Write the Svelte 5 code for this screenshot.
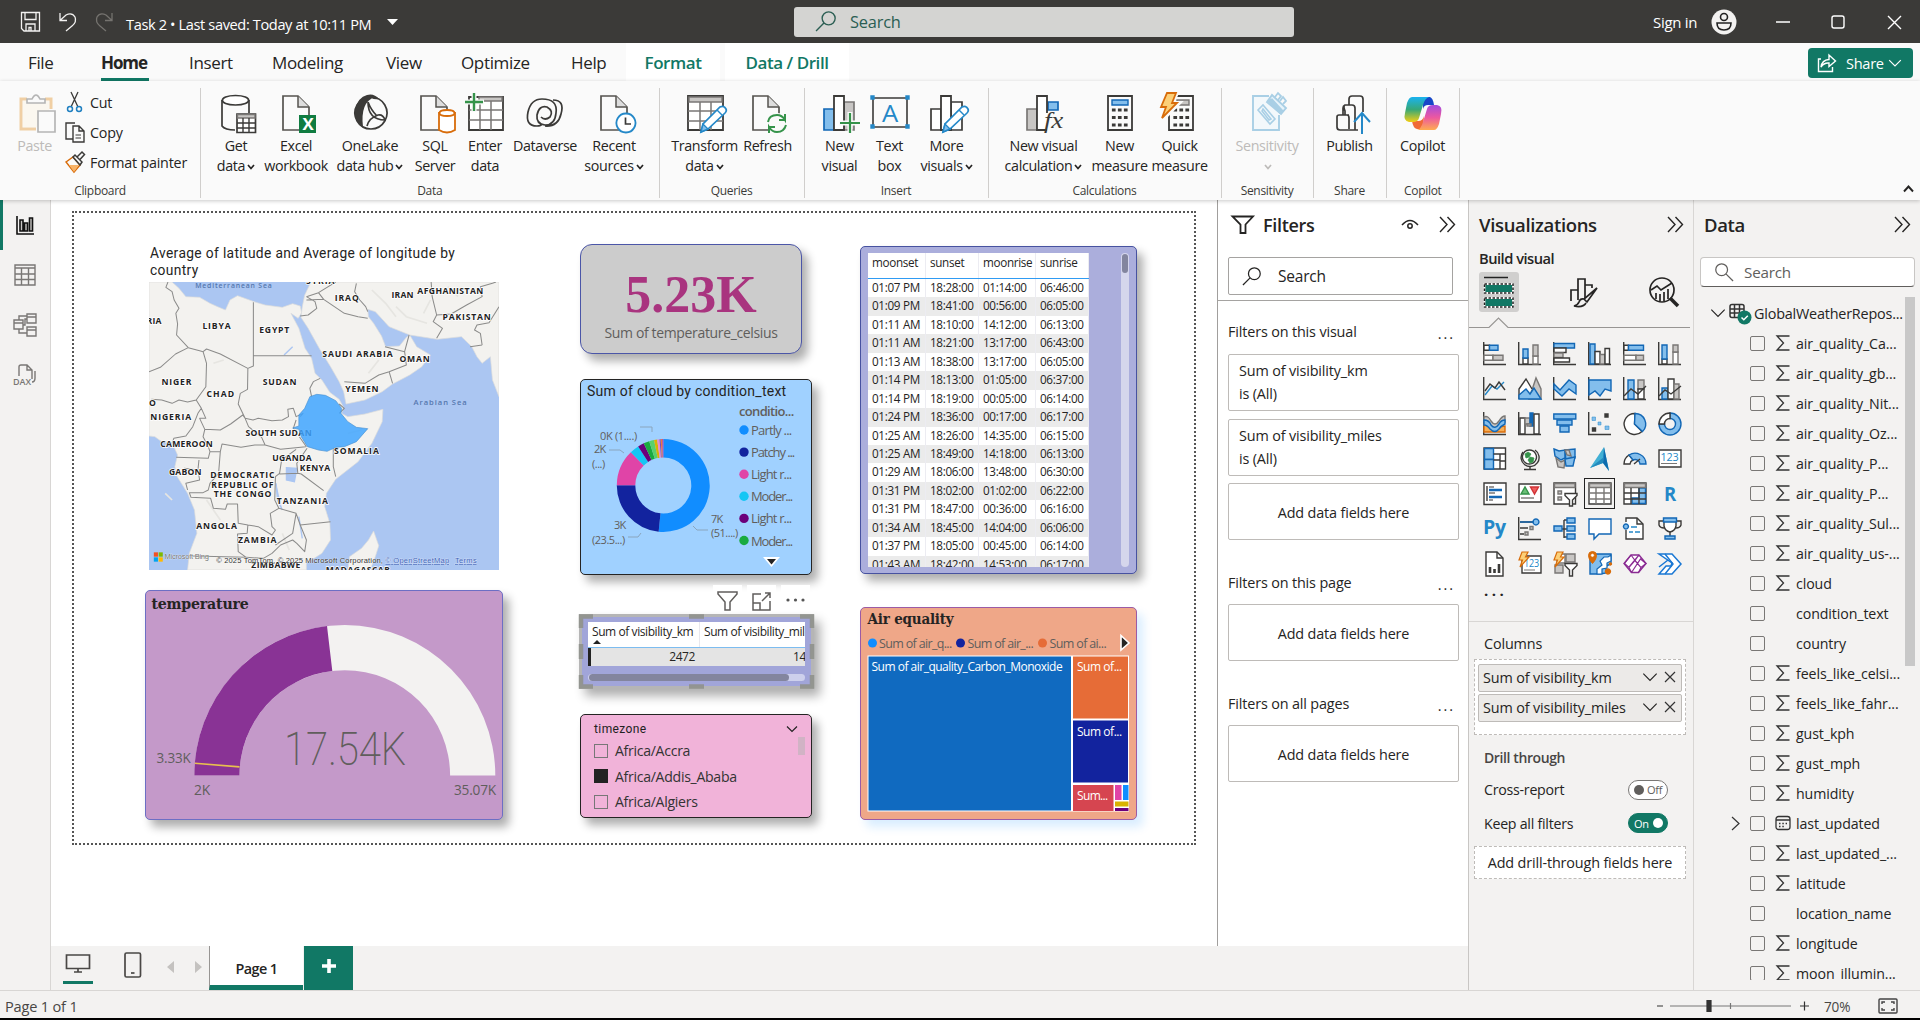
<script>
  const K = '#3b3a38', B = '#1267b5', b = '#83beec', G = '#797775', g = '#c8c6c4', W = '#fff', N = 'none';
  const GR = '#35934a', O = '#d86c0a', PU = '#8b2c93', C = '#2488c8';
  const r = (x, y, w, h) => `M${x} ${y}h${w}v${h}h${-w}z`;
  const p = (d, stroke = K, fill = N, w = 1.4) => ({ d, stroke, fill, w });
  const t = (text, x, y, size, fill, len, extra = {}) => ({ text, x, y, size, fill, len, ...extra });
  const axis = p('M.7 0V22.5H23');
  const bolt = p('M4 0H10L7.500 5H11L2 15L4.500 8H1Z', O, '#fcd078', 1.2);
  const funnel = p('M12 11.500h12v2l-4.500 4.500v6h-3v-6L12 13.500z', K, W);

  const visuals = [
    [axis, p(r(1, 3.3, 5.5, 5), K, W), p(r(6.500, 3.300, 8.500, 5), B, b), p(r(1, 13.300, 9, 5), G, W), p(r(10, 13.300, 10, 5), G, g)],
    [axis, p(r(5, 16, 5, 6), K, W), p(r(5, 7, 5, 9), B, b), p(r(15, 14, 5, 8), G, W), p(r(15, 3, 5, 11), G, g)],
    [axis, p(r(1, 1.5, 20.500, 4.500), B, b), p(r(1, 6, 12, 4.500), K, W), p(r(1, 11, 9, 4.500), G, g), p(r(1, 16, 15.500, 4), K, W)],
    [axis, p(r(2, 2, 5, 20), B, b), p(r(7, 9.500, 5, 12.500), K, W), p(r(12, 12.500, 5, 9.500), G, g), p(r(17, 6.500, 4.500, 15.500), K, W)],
    [axis, p(r(1, 3.3, 4.500, 5), K, W), p(r(5.500, 3.3, 15, 5), B, b), p(r(1, 13.3, 12, 5), G, W), p(r(13, 13.300, 7.500, 5), G, g)],
    [axis, p(r(4, 17, 5, 5), K, W), p(r(4, 3, 5, 14), B, b), p(r(15, 10, 5, 12), G, W), p(r(15, 3, 5, 7), G, g)],
    [axis, p('M2 18L9 9L14 12L21 5', C), p('M2 14L7 7L12 11L16 5L22 13', K)],
    [p('M11 22L18 1L23 12V22Z', G, g), p('M1 22V12L8 2L14 12', K, W), p('M1 22V18L8 12L12 17L16 11L23 22Z', B, b)],
    [axis, p('M1 7L7 13L16 3L23 8V17L16 12L9 19L1 12Z', B, b)],
    [axis, p('M1 3H23V14L17 12L12 19L7 14L1 18Z', B, b)],
    [axis, p(r(5, 3, 6, 19), B, b), p(r(15, 3, 6, 9), G, g), p(r(15, 12, 6, 10), K, W), p('M1 19L8 12L15 17L23 9')],
    [axis, p(r(4, 11, 6, 11), B, b), p(r(10, 2, 6, 20), K, W), p(r(16, 7, 5, 15), G, g), p('M1 19L7 13L13 17L23 9')],
    [axis, p('M1 5Q5 3 8 9Q12 15 16 9Q19 4 22 4V10Q18 12 15 17Q12 19 7 15L1 10Z', G, g), p('M1 12Q5 12 8 16Q12 19 16 15L22 14V20H1Z', O, '#f6ad55'), p('M1 8Q6 8 8 13Q12 18 16 12Q18 8 22 8V12Q18 14 16 17Q12 22 7 17Q4 13 1 13Z', B, b)],
    [axis, p(r(2, 6, 5, 16), K, W), p(r(7, 6, 5, 6), G, g), p(r(12, 1, 3, 13), B, B), p(r(9, 12, 4, 2), G, g), p(r(16, 2, 5, 20), K, W)],
    [p(r(.8, 2, 22, 5), B, b), p(r(4, 8, 15, 5), B, b), p(r(7, 14, 9, 6), B, b)],
    [axis, p(r(4, 5, 3.500, 3.500), C, b, .5), p(r(10, 10, 3, 3), C, b, .5), p(r(17, 14, 4, 3.500), C, b, .5), p(r(17, 2, 3, 3), K, K), p(r(4.500, 16, 3, 3), K, K)],
    [p('M12 1.500a10.500 10.500 0 1 0 7 18L11.500 12z', K, W), p('M12 1.500a10.500 10.500 0 0 1 7.500 18L11.500 12z', B, b)],
    [p('M12 1A11 11 0 1 1 1 12H6.500A5.500 5.500 0 1 0 12 6.500Z', B, b), p('M1 12A11 11 0 0 1 12 1V6.500A5.500 5.500 0 0 0 6.500 12Z', K, W)],
    [p(r(1, 1, 21.500, 21), K, W), p(r(1.500, 1.500, 9, 11), B, b), p(r(1.500, 12.500, 9, 9.500), B, b), p('M10.500 7H22M10.500 13H17V22M17 7V22M17 14H22', K)],
    [p('M5 5a9 9 0 1 0 12-2', K), p('M11.500 3a7 7 0 1 1-.1 0z', K, W), p('M7 7l3-2 3 2-2 3-3 1zM12 10l4 1-1 4-3 1-2-3z', GR, GR, .8), p('M12 19v3M6 22.500h12')],
    [p('M1 2l5 2 6-1V11L8 13L2 9Z', B, b), p('M12 3l10-1V11l-9 3z', B, b), p('M12 3l2 5 4 1-2-6zM3 11l5 4 4-2-1 8-6-1z', G, g), p('M12 12L22 10L20 19L13 19z', B, b)],
    [p('M16 0L2 21L15 16L21 24Z', N, '#41b0d5'), p('M16 0L15 16L21 24Z', N, '#0e6caf'), p('M2 21L15 16L16 10Z', N, '#238abd')],
    [p('M1 17a11 11 0 0 1 5-9l4 5a5 5 0 0 0-3 4z', K, W), p('M6 8a11 11 0 0 1 17 9h-6a5 5 0 0 0-7-4z', B, b), p('M11 17L17 12')],
    [p(r(1, 3, 22, 17), K, W), t('123', 2.500, 14, 11, C, 18), p('M3 16.500h16', G, N, 1)],
    [p(r(1, 1, 22, 21.500), K, W), p('M4 4v15', K), p('M6 8h13M6 15h13', B, N, 2.5), p('M6 5h5M6 11h6M6 18h4', G)],
    [p(r(1, 2, 22, 18), K, W), p('M3 12L7 5L11 12Z', GR, '#6abf76'), p('M12.500 5h8l-4 7z', '#d13438', '#ee5c5c'), p('M3 16h13', G)],
    [p(r(1, 1, 21.500, 21), K, W), p(r(1.500, 1.500, 20.500, 4), G, g), p(r(5, 9, 3.500, 3), G, g), p(r(5, 15, 3.500, 3), G, g), funnel],
    [p(r(1, 1, 22, 21), K, W), p(r(1.500, 1.500, 21, 4), G, g), p('M1 11H23M1 17H23M8 6V22M16 6V22', G)],
    [p(r(1, 1, 22, 21), K, W), p('M16 6h6.500v15.500H9V16h7z', B, b), p(r(1.500, 1.500, 21, 4), G, g), p('M1 11H23M1 17H23M8 6V22M16 6V22', K)],
    [t('R', 6, 19, 19, C, 12, { bold: true })],
    [t('Py', 0, 17, 20, C, 23, { bold: true })],
    [axis, p('M2 5H16M2 11H10M2 17H6', K), p('M18 2a3 3 0 1 1-.1 0z', B, b), p('M12 9.500h3v3h-3zM7 15h3v3H7z', G, g), p('M2 5H16', B)],
    [p('M8 12H14M11 3V21M11 3H15M11 20H15', K), p(r(1, 9, 8, 5), B, b), p(r(14, 1, 8, 5), B, b), p(r(14, 9, 8, 5), B, b), p(r(14, 17, 8, 5), B, b)],
    [p('M1 2H23V17H11L6 22V17H1Z', B, W)],
    [p('M3 5V1H14L20 7V22H3V13', K, W), p('M14 1V7H20', K), p('M3 7a2.500 2.500 0 1 1-.1 0z', B, b), p('M8 10h6M6 15h4M12 15h5', C, N, 1.6)],
    [p('M6 2H18V9Q17 14 12 15Q7 14 6 9Z', K, W), p('M6 4H1V8Q2 11 6 11M18 4H23V8Q22 11 18 11M12 15V19', K), p(r(5.500, 1, 13, 4), B, b), p(r(7, 19, 10, 3), B, b)],
    [p('M3 0H14L20 6V24H3Z', K, W), p('M14 0V6H20', K), p('M7 21v-6M11.500 21v-4M16 21v-9', K, N, 2.6)],
    [p(r(4, 4, 19, 17), K, W), t('123', 6, 15, 10, C, 15), p('M6 18h11', G, N, 1), bolt],
    [p(r(4, 2, 8, 9), G, W), p(r(13, 2, 9, 8), G, g), p(r(2, 13, 8, 8), G, g), funnel, bolt],
    [p('M2 2H23V12L18 14V21L12 22H2Z', B, b), p('M23 3V9L19 11V16L14 17V22H9V17L14 13L12 9L16 5H20Z', B, W, 1.2), p('M4.500-.5a4 4 0 0 1 4 4q0 4-4 8q-4-4-4-8a4 4 0 0 1 4-4z', O, O, 1), p('M4.500 2a1.300 1.300 0 1 1-.1 0z', W, W, .5), p('M20 17a2.500 2.500 0 1 1-.1 0z', O, O), p('M22.500 11a1 1 0 1 1-.1 0z', O, O)],
    [p('M8 3H16L23 11.500L15.500 20.500H8.500L1 11.500Z', PU, W, 1.4), p('M8 3L1.500 11.500L6 15.500L12 8.500L8 3M16 3L6.500 14.500M12 8.500L18 15.500L15.500 20.500M12 8.500L16 3M18 15.500L23 11.500L17.500 7L8.500 20.500M6 15.500L8.500 20.500', PU, N, 1.2)],
    [p('M1 2H14L23 12L14 22H1L8 14H13L14 11L1 2Z', '#1a78d4', W, 1.5), p('M7 2L15 12L7 22M1 15L10 8', '#1a78d4', N, 1.5)]
  ];

  const page = (x) => [p(`M${x} 4H${x + 15}L${x + 26} 15V38H${x}Z`, '#55534f', '#fafafa', 1.7), p(`M${x + 15} 4V15H${x + 26}`, '#55534f', '#ddd', 1.5)];
  const pencil = [p('M16 40L18 32L35 15Q39 13 41 17Q42 19 40 21L23 37Z', '#2488c8', W, 1.7), p('M16 40L18 32L23 37Z', '#2488c8', b), p('M32 18L37 23', '#2488c8')];
  const keys = (x) => p([0, 1, 2].map((j) => [0, 1, 2].map((i) => r(x + i * 6, 17 + j * 7.500, 2.500, 2)).join('')).join(''), K, K, 1.2);

  const icons = {
    paste: [p('M9 7H3V37H18M27 7H33V17', '#f0cfa4', N, 3), p('M5 9H31V35H5Z', N, '#fbf7ef'), p('M9 11V7H14Q18-1 22 7H27V11Z', '#b5b5b5', '#fafafa', 1.6), p(r(20, 19, 17, 21), '#b5b5b5', '#fafafa', 1.7)],
    getdata: [p('M6 8V34Q9 38 19 38M33 8V21', K, N, 1.7), p('M19.500 3.500C37 3.500 37 13 19.500 13S2 3.500 19.500 3.500z', K, W, 1.7), p(r(21, 22, 18.500, 18.500), K, W, 1.7), p(r(21.500, 22.500, 17.500, 3.500), G, g), p('M21 31H39M21 36H39M27 26V40M33 26V40', K)],
    excel: [...page(7), p(r(23, 23, 17, 18), N, '#107c41'), t('X', 26.500, 37.500, 16, W, 11, { bold: true })],
    onelake: [p('M21 5A16 16 0 1 1 20.900 5Z', K, '#fafafa', 1.7), p('M25 5Q10 10 13 35Q3 28 5 18Q8 5 17 3Q24 1 29 7Q25 8 21 6Z', N, K), p('M18 10Q18 28 35 28Q33 22 28 23Q19 26 17 34M18 10Q21 18 27 24', K, N, 1.7)],
    sql: [...page(6), p('M24 21V38Q32 43 40 38V21Z', O, W, 1.8), p('M32 18C42 18 42 24 32 24S22 18 32 18z', O, W, 1.8)],
    enter: [p(r(4, 5, 34, 33), K, W, 1.8), p(r(14, 5, 23, 4), G, g), p('M4 18H38M4 28H38M15 12V38M26 9V38', G, N, 1.5), p('M9 0V20M-1 10H19', '#fafafa', N, 5), p('M9 1V19M0 10H18', GR, N, 2.4)],
    dataverse: [p('M12 34Q0 34 3 20Q6 7 17 7Q33 7 31 21Q30 33 20 33Q11 32 12 23Q14 13 22 15Q29 19 25 25Q20 29 16 25M28 8Q40 8 36 22Q33 35 20 34M12 34Q16 34 17 32', K, N, 1.7)],
    recent: [...page(7), p('M32 21.500a9.500 9.500 0 1 1-.1 0z', '#2488c8', W, 1.8), p('M31.500 25.500V32H37', K, N, 1.7)],
    transform: [p(r(3, 4, 35, 34), K, W, 1.8), p(r(4, 5, 33, 5), G, g), p('M3 19H38M3 29H38M15 10V38M26 10V38', G, N, 1.5), ...pencil],
    refresh: [...page(5), p('M29 21a10.500 10.500 0 1 1-.1 0z', N, '#fafafa'), p('M20 30Q21 23 29 23Q34 23 37 28V22M37 28H31M38 33Q36 40 29 40Q24 40 21 35V41M21 35H27', GR, N, 2)],
    newvisual: [p(r(4, 17, 10, 21), B, b, 1.7), p(r(24, 10, 10, 28), G, g, 1.7), p(r(14, 4, 10, 34), K, W, 1.8), p('M30 20V42M19 31H41', '#fafafa', N, 5), p('M30 21V41M20 31H40', GR, N, 2.2)],
    textbox: [p(r(3, 6, 34, 29), K, '#fafafa', 1.6), p(r(1, 4, 3, 3) + r(36, 4, 3, 3) + r(1, 33, 3, 3) + r(36, 33, 3, 3), C, C), t('A', 12, 30, 24, C, 16)],
    morevisuals: [p(r(4, 17, 10, 21), K, W, 1.7), p(r(24, 10, 11, 28), K, W, 1.7), p(r(14, 4, 10, 34), K, W, 1.8), ...pencil],
    newcalc: [p(r(3, 17, 10, 21), G, g, 1.7), p(r(24, 10, 10, 8), B, b, 1.7), p('M23 38H13V4H23V21', K, W, 1.8), t('fx', 20, 36, 24, K, 19, { serif: true })],
    newmeasure: [p(r(8, 4, 24, 34), K, '#fafafa', 1.8), p(r(12, 8, 16, 5), B, b), keys(12.500)],
    quick: [p(r(9, 4, 24, 34), K, '#fafafa', 1.8), p(r(17, 8, 12, 5), G, g), keys(14), p('M7 1H17L12 11H19L2 28L7 16H0Z', '#fafafa', '#fafafa', 4), p('M7 1H16L12 11H17L2 26L6 15H1Z', O, '#fcd078', 1.8)],
    sensitivity: [p('M22 4H6V38H32V23', '#a9cfe5', '#f3f8fb', 1.9), p('M11 18L16 13L28 27L23 32ZM15 19L16 17L24 27L22 28Z', '#a9cfe5', N, 1.6), p('M20 10L25 3L39 16L34 22Z', '#a9cfe5', '#e7f3fa', 1.9), p('M21 9L25 7L36 19L33 21Z', '#a9cfe5', '#a9cfe5'), p('M28 5L31 1L34 4L31 8M33 9L36 5L39 9L36 12', '#a9cfe5', N, 1.8)],
    publish: [p('M7 25Q7 23 9 23H15V19Q13 14 15 13H19V7Q19 4 22 4H30Q33 4 33 7V20M13 23V16Q13 14 15 13H22Q25 13 25 16V37M19 23H17Q19 23 19 26V37M7 25V35Q7 38 10 38H28M9 23H17M25 20V38', K, N, 1.7), p('M32 42V22M24 30L32 21L40 30', '#2488c8', N, 2)]
  };

  const groups = [
    { name: 'Data', w: 458.500, pad: 5, items: [
      ['getdata', 'Get', 'data', 60, 1], ['excel', 'Excel', 'workbook', 60], ['onelake', 'OneLake', 'data hub', 88, 1], ['sql', 'SQL', 'Server', 42],
      ['enter', 'Enter', 'data', 58], ['dataverse', 'Dataverse', '', 62], ['recent', 'Recent', 'sources', 76, 1]] },
    { name: 'Queries', w: 145, pad: 5, items: [['transform', 'Transform', 'data', 80, 1], ['refresh', 'Refresh', '', 46]] },
    { name: 'Insert', w: 184, pad: 10, items: [['newvisual', 'New', 'visual', 50], ['textbox', 'Text', 'box', 50], ['morevisuals', 'More', 'visuals', 64, 1]] },
    { name: 'Calculations', w: 233, pad: 5, items: [['newcalc', 'New visual', 'calculation', 100, 1], ['newmeasure', 'New', 'measure', 52], ['quick', 'Quick', 'measure', 68]] },
    { name: 'Sensitivity', w: 92, pad: 0, off: true, items: [['sensitivity', 'Sensitivity', '', 91, 1]] },
    { name: 'Share', w: 73, pad: 0, items: [['publish', 'Publish', '', 72]] },
    { name: 'Copilot', w: 73.500, pad: 0, items: [['copilot', 'Copilot', '', 72]] }
  ];

  const rows = [
    ['01:07 PM', '18:28:00', '01:14:00', '06:46:00'], ['01:09 PM', '18:41:00', '00:56:00', '06:05:00'], ['01:11 AM', '18:10:00', '14:12:00', '06:13:00'],
    ['01:11 AM', '18:21:00', '13:17:00', '06:43:00'], ['01:13 AM', '18:38:00', '13:17:00', '06:05:00'], ['01:14 PM', '18:13:00', '01:05:00', '06:37:00'],
    ['01:14 PM', '18:19:00', '00:05:00', '06:14:00'], ['01:24 PM', '18:36:00', '00:17:00', '06:17:00'], ['01:25 AM', '18:26:00', '14:35:00', '06:15:00'],
    ['01:25 AM', '18:49:00', '14:18:00', '06:13:00'], ['01:29 AM', '18:06:00', '13:48:00', '06:30:00'], ['01:31 PM', '18:02:00', '01:02:00', '06:22:00'],
    ['01:31 PM', '18:47:00', '00:36:00', '06:16:00'], ['01:34 AM', '18:45:00', '14:04:00', '06:06:00'], ['01:37 PM', '18:05:00', '00:45:00', '06:14:00'],
    ['01:43 AM', '18:42:00', '14:53:00', '06:17:00']
  ];

  const fields = [
    ['air_quality_Ca...', 1], ['air_quality_gb...', 1], ['air_quality_Nit...', 1], ['air_quality_Oz...', 1], ['air_quality_P...', 1], ['air_quality_P...', 1],
    ['air_quality_Sul...', 1], ['air_quality_us-...', 1], ['cloud', 1], ['condition_text', 0], ['country', 0], ['feels_like_celsi...', 1], ['feels_like_fahr...', 1],
    ['gust_kph', 1], ['gust_mph', 1], ['humidity', 1], ['last_updated', 2], ['last_updated_...', 1], ['latitude', 1], ['location_name', 0], ['longitude', 1], ['moon_illumin...', 1]
  ];

  const slices = [[0, 51.6, '#118dff'], [51.6, 75.1, '#12239e'], [75.1, 87.7, '#e044a7'], [87.7, 90.9, '#15c6f4'], [90.9, 93.1, '#6b007b'], [93.1, 95.1, '#1aab40'],
    [95.1, 96.8, '#5ad06c'], [96.8, 97.9, '#d9b300'], [97.9, 98.7, '#e98bd0'], [98.7, 99.100, '#744ec2'], [99.100, 99.600, '#e8793f'], [99.600, 100, '#c83d95']];
  function arc([a, z]) {
    const pt = (v, rad) => {
      const q = (v / 100) * Math.PI * 2;
      return `${(82.3 + rad * Math.sin(q)).toFixed(2)} ${(105.500 - rad * Math.cos(q)).toFixed(2)}`;
    };
    const big = z - a > 50 ? 1 : 0;
    return `M${pt(a, 46.500)}A46.500 46.500 0 ${big} 1 ${pt(z, 46.500)}L${pt(z, 28)}A28 28 0 ${big} 0 ${pt(a, 28)}Z`;
  }
  const legend = [['Partly ...', '#118dff', 35], ['Patchy ...', '#12239e', 38], ['Light r...', '#e044a7', 35], ['Moder...', '#15c6f4', 36], ['Light r...', '#6b007b', 35], ['Moder...', '#1aab40', 36]];

  const places = [
    ['SYRIA', 889, 252, 82], ['IRAQ', 972, 304, 70], ['IRAN', 1137, 293, 64], ['AFGHANISTAN', 1212, 283, 191], ['PAKISTAN', 1285, 361, 140],
    ['LIBYA', 588, 388, 82], ['EGYPT', 753, 398, 87], ['SAUDI ARABIA', 936, 472, 204], ['OMAN', 1160, 487, 88], ['NIGER', 469, 556, 87], ['SUDAN', 763, 556, 98],
    ['CHAD', 600, 592, 80], ['YEMEN', 1003, 577, 96], ['NIGERIA', 437, 661, 118], ['SOUTH SUDAN', 713, 709, 192], ['CAMEROON', 466, 741, 152],
    ['SOMALIA', 970, 761, 130], ['UGANDA', 791, 782, 114], ['KENYA', 871, 814, 88], ['GABON', 491, 825, 94], ['DEMOCRATIC', 611, 834, 186],
    ['REPUBLIC OF', 614, 863, 180], ['THE CONGO', 621, 890, 167], ['TANZANIA', 804, 913, 148], ['ANGOLA', 570, 987, 118], ['ZAMBIA', 691, 1029, 112],
    ['ZIMBABWE', 730, 1105, 142], ['MADAGASCAR', 946, 1118, 186], ['RIA', 426, 372, 43], ['O', 433, 619, 16]
  ];
  const borders = 'M488 246L482 262L500 275L506 300L520 325L511 340L516 372L513 405L547 443L580 452L590 455L600 447L640 462L720 505L736 498V307M736 467H905M547 443L510 462L466 502L433 515M590 455L600 490L598 560L570 600L545 606L520 600L500 610L470 600L440 598M570 600L585 625L575 640L560 680L540 708L505 715L500 730M720 505L719 568L698 580L692 612L712 655L705 645L670 672L640 690L595 688L580 655L598 655L585 625M712 655L735 660L750 655L790 662L820 660L838 650L836 628L852 625L860 650L880 640L872 650M712 655L722 680L760 712L770 735L740 735L700 742L645 732L640 755L610 755L605 775L512 772M595 688L590 710L605 740L610 755M640 755L635 820L610 850L605 870L590 878H550L555 892L612 895L620 925L655 928L660 912H690L692 970L720 975L718 1000L690 1002L692 1055L715 1072L560 1068M770 735L815 748L888 740M860 748L818 780L812 820L800 830L798 900L810 925L785 940L790 980L800 990L790 1005L750 980L720 975M812 822L865 820L875 822L940 872M865 820L862 790L892 745M968 745V800L975 830M905 590L900 565L910 545L930 535M860 660L852 685L890 740M985 612L1000 625L985 640M810 925L860 940L872 975L960 965M872 975L890 1020L885 1055L862 1030L850 1020L815 1035L790 1060L765 1075L715 1072M860 940L850 1000L800 1035M578 780L575 810L535 805M575 810L580 840L540 850L545 870M890 290L915 305L920 325L895 345L872 348M890 300L940 298L1000 340L1040 350L1068 355M940 298L925 278L890 290M925 278L975 246M1035 250L1030 275L1045 300L1062 320L1068 335M1000 545L1060 550L1100 525L1130 515L1180 495L1175 455L1118 440M1130 515L1140 550M1175 455L1188 405M1252 246L1255 290L1268 345L1258 365L1285 385L1268 415M1268 345L1310 342L1355 315L1400 290L1395 260L1430 250M1400 435L1365 440M1400 435L1395 400L1378 390L1385 375L1420 368L1449 320M1430 250L1440 246';
</script>

{#snippet shapes(list)}
  {#each list as s}
    {#if s.text}
      <text x={s.x} y={s.y} font-size={s.size} fill={s.fill} textLength={s.len} lengthAdjust="spacingAndGlyphs" font-weight={s.bold ? 700 : 400}
        font-family={s.serif ? 'Liberation Serif' : 'Open Sans'} font-style={s.serif ? 'italic' : 'normal'}>{s.text}</text>
    {:else}
      <path d={s.d} stroke={s.stroke} fill={s.fill} stroke-width={s.w} />
    {/if}
  {/each}
{/snippet}
{#snippet chev(size)}
  <svg class="chev" width={size} height={size} viewBox="0 0 12 12"><path d="M1 3.500L6 8.500L11 3.500" fill="none" stroke="currentColor" stroke-width={14 / size} /></svg>
{/snippet}
{#snippet collapse()}
  <svg width="17" height="17" viewBox="0 0 17 17" fill="none" stroke="#252423" stroke-width="1.400"><path d="M1 1L8 8.500L1 16M8.500 1L15.500 8.500L8.500 16" /></svg>
{/snippet}
{#snippet lens(size, flip)}
  <svg class:flip width={size} height={size} viewBox="0 0 20 20" fill="none" stroke="currentColor" stroke-width="1.300"><circle cx="13" cy="7" r="6.200" /><path d="M8.500 11.500L1 19" /></svg>
{/snippet}

<div class="app">
  <header class="titlebar">
    <svg class="qa" width="104" height="26" viewBox="0 0 104 26" fill="none" stroke="#f3f2f1" stroke-width="1.300">
      <path d="M1.500 3.500H19.500V22H4L1.500 19.500ZM5 4V10.500H16V4M6 22V15H15V22M9 22V18.500H11V22" />
      <path d="M40 4V11.500H47M40 11.500L46 6Q52 3 55 8Q57 13 52 17L46 22" />
      <path stroke="#75736f" d="M92 4V11.500H85M92 11.500L86 6Q80 3 77 8Q75 13 80 17L86 22" />
    </svg>
    <span class="doc">Task 2 • Last saved: Today at 10:11 PM</span>
    <svg width="11" height="6" viewBox="0 0 11 6"><path d="M0 0H11L5.500 6Z" fill="#fff" /></svg>
    <div class="topsearch">{@render lens(21)}<span>Search</span></div>
    <span class="signin">Sign in</span>
    <svg class="avatar" width="26" height="26" viewBox="0 0 26 26"><circle cx="13" cy="13" r="12.500" fill="#f3f2f1" /><circle cx="13" cy="8" r="3.500" fill="none" stroke="#222" stroke-width="1.600" /><path d="M6 14H20Q20 21 13 21Q6 21 6 14Z" fill="none" stroke="#222" stroke-width="1.600" /></svg>
    <svg class="win" width="126" height="16" viewBox="0 0 126 16" fill="none" stroke="#fff" stroke-width="1.400"><path d="M0 8H14M112 2L125 15M125 2L112 15" /><rect x="56" y="2" width="12" height="12" rx="2" /></svg>
  </header>

  <nav class="tabs">
    <span class="t file">File</span><span class="t home">Home</span><span class="t insert">Insert</span><span class="t modeling">Modeling</span><span class="t view">View</span>
    <span class="t optimize">Optimize</span><span class="t help">Help</span><span class="t ctx format">Format</span><span class="t ctx drill">Data / Drill</span>
    <button class="share">
      <svg width="20" height="20" viewBox="0 0 20 20" fill="none" stroke="#fff" stroke-width="1.400"><path d="M4 6H1.500V18.500H15.500V14M4 14Q5 7 12 6.500V2L18.500 8L12 13.500V10Q7 9.500 4 14Z" /></svg>
      <span>Share</span>{@render chev(14)}
    </button>
  </nav>

  <section class="ribbon">
    <div class="group clip">
      <div class="gbody">
        <div class="paste"><svg width="40" height="42" viewBox="-3 0 40 42">{@render shapes(icons.paste)}</svg><span>Paste</span></div>
        <div class="cliplist">
          <div><svg width="20" height="22" viewBox="0 0 20 22" fill="none" stroke="#3b3a38" stroke-width="1.300"><path d="M6 1L13 16M13 1L6 16" /><g stroke="#1f7fc0" stroke-width="1.500"><circle cx="5" cy="18" r="2.500" /><circle cx="14" cy="18" r="2.500" /></g></svg>Cut</div>
          <div><svg width="20" height="22" viewBox="0 0 20 22" fill="#fafafa" stroke="#3b3a38" stroke-width="1.400"><path d="M8 18H1V2H10M8 5H14L19 10V21H8ZM14 5V10H19" /><path d="M10.500 14H16M10.500 17H16" stroke-width="1" /></svg>Copy</div>
          <div><svg width="20" height="22" viewBox="0 0 20 22" fill="#fafafa" stroke-width="1.500"><path d="M1 11L8 6L15 14L9 21Z" stroke="#d86c0a" /><path d="M4 14L14 14L9 21Z" fill="#f8b368" /><path d="M8 6L10 4L17 11L15 14ZM12 6L17 1L19.500 3.500L14.500 9" stroke="#3b3a38" /></svg>Format painter</div>
        </div>
      </div>
      <span class="gname">Clipboard</span>
    </div>
    {#each groups as grp}
      <div class="group" class:off={grp.off} style:width="{grp.w}px">
        <div class="gbody" style:padding-left="{grp.pad}px">
          {#each grp.items as [icon, a, z, w, menu]}
            <div class="btn" style:width="{w}px">
              {#if icon === 'copilot'}
                <svg width="40" height="42" viewBox="0 0 40 42">
                  <defs>
                    <linearGradient id="cp1" x1="0" y1="0" x2="0" y2="1"><stop offset="0" stop-color="#1ab2f0" /><stop offset=".5" stop-color="#36a878" /><stop offset="1" stop-color="#f3ce14" /></linearGradient>
                    <linearGradient id="cp2" x1="0" y1="0" x2="0" y2="1"><stop offset="0" stop-color="#a34cdf" /><stop offset=".5" stop-color="#ec58a0" /><stop offset="1" stop-color="#ffac50" /></linearGradient>
                  </defs>
                  <path d="M20 5H27Q30 6 31 13H25Q21 13 20 17Z" fill="#1747c8" /><path d="M20 37H14Q10 36 9 29H15Q20 29 21 24Z" fill="#f06a36" />
                  <path d="M9 5H26Q22 6 20 13L16 26Q15 30 10 30H6Q0 29 2 21L4 11Q6 5 9 5Z" fill="url(#cp1)" />
                  <path d="M31 38H14Q18 37 20 30L24 17Q25 13 30 13H34Q40 14 38 22L36 32Q34 38 31 38Z" fill="url(#cp2)" />
                </svg>
              {:else}
                <svg width="40" height="42" viewBox="0 0 40 42">{@render shapes(icons[icon])}</svg>
              {/if}
              <span>{a}</span><span>{z}{#if menu}<svg class="mini" width="8" height="6" viewBox="0 0 8 6"><path d="M1 1L4 4.500L7 1" fill="none" stroke="currentColor" stroke-width="1.700" /></svg>{/if}</span>
            </div>
          {/each}
        </div>
        <span class="gname">{grp.name}</span>
      </div>
    {/each}
    <svg class="up" width="11" height="8" viewBox="0 0 11 8"><path d="M1 6.500L5.500 1.500L10 6.500" fill="none" stroke="#252423" stroke-width="1.900" /></svg>
  </section>

  <main>
    <aside class="rail">
      <div class="sel"><svg width="24" height="24" viewBox="0 0 24 24" fill="#c8c6c4" stroke="#111" stroke-width="1.600"><path d="M4 3V21H21" fill="none" /><path d="M7 7h3v11H7zM11.500 10h3v8h-3zM16.500 5h3v13h-3z" /></svg></div>
      <div><svg width="24" height="24" viewBox="0 0 24 24" fill="none" stroke="#797775" stroke-width="1.400"><path d="M2 2H22V22H2ZM2 5H22M2 11H22M2 16.500H22M8.500 5V22M15.500 5V22" /></svg></div>
      <div><svg width="24" height="24" viewBox="0 0 24 24" fill="none" stroke="#797775" stroke-width="1.400"><path d="M1 7H10V16H1ZM1 10H10M14 1H23V10H14ZM14 4H23M14 14H23V23H14ZM14 17H23M6 7V3H14M10 12H12V6H14M6 16V20H14" /></svg></div>
      <div><svg width="26" height="26" viewBox="0 0 26 26" fill="none" stroke="#797775" stroke-width="1.400"><path d="M7 14V5Q7 3 9 3H15L20 8V17M15 3V8H20M20 20Q23 20 23 16V9" /><text x="1" y="23" font-size="9" fill="#797775" stroke="none" font-weight="600" textLength="18" font-family="Open Sans">DAX</text></svg></div>
    </aside>

    <div class="stage">
      <div class="canvas">
        <div class="pagearea"></div>

        <div class="visual maptitle">Average of latitude and Average of longitude by country</div>
        <svg class="visual map" viewBox="433 246 1016 864" preserveAspectRatio="none">
          <rect x="433" y="246" width="1016" height="864" fill="#abc6f2" />
          <g fill="#f3f2ef" stroke="#dcdcda" stroke-width="2">
            <path d="M433 246H500L520 265L540 290L580 292L610 310L632 320L655 330L668 300L690 287L735 304L770 315L820 322L850 311L872 318L876 338L866 355L845 340L868 385L886 445L905 475L915 520L935 540L958 577L985 598L998 622L992 640L1010 650L1060 642L1112 628L1110 665L1080 730L1040 785L975 838L948 880L943 920L958 970L960 1020L935 1060L890 1090V1110H545L550 1060L572 1000L565 930L545 880L515 830L508 800L516 765L500 728L470 725L450 710L433 708Z" />
            <path d="M903 246L885 285L878 320L874 352L895 385L930 450L960 500L985 545L998 575L1005 612L1060 600L1110 575L1140 552L1190 525L1225 500L1250 465L1210 440L1190 405L1180 412L1160 438L1120 440L1108 408L1085 370L1070 350L1068 328L1090 335L1130 380L1190 405L1270 418L1340 410L1370 440L1385 470L1400 490L1424 470L1430 540L1449 590V246Z" />
            <path d="M1085 993L1100 1037L1090 1070L1075 1110H1010L1015 1070L1050 1045L1070 1020Z" />
          </g>
          <path d="M1250 300L1230 340M1150 320L1180 350L1240 370M1080 270L1120 310L1150 350M1300 260L1330 290M600 900L640 960M820 1000L840 1050M480 880L500 900M1010 700L1050 690M1100 480L1070 520M650 480L620 490" fill="none" stroke="#e6e5e1" stroke-width="5" />
          <path d="M832 803L862 805L855 845L832 840ZM802 850L806 900L820 930M868 950L878 1015M825 465L850 440" fill="#abc6f2" stroke="#abc6f2" stroke-width="4" />
          <path d={borders} fill="none" stroke="#8b8b8a" stroke-width="3" stroke-linejoin="round" />
          <g class="labels">
            {#each places as [name, x, y, len]}<text {x} {y} textLength={len}>{name}</text>{/each}
          </g>
          <path d="M900 590L920 583L945 586L975 602L992 625L990 640L1010 665L1035 682L1068 686L1035 725L1000 740L975 742L950 754L925 750L893 740L875 710L868 688L850 684L868 678V645L885 625Z" fill="#3ea4ff" fill-opacity=".84" stroke="#4b93d2" stroke-width="2" />
          <g class="sea"><text x="567" y="263" textLength="222" font-size="20">Mediterranean Sea</text><text x="1201" y="616" textLength="154">Arabian Sea</text></g>
          <path d="M447 1057h12v13h-12z" fill="#f25022" /><path d="M461 1057h12v13h-12z" fill="#7fba00" /><path d="M447 1072h12v13h-12z" fill="#00a4ef" /><path d="M461 1072h12v13h-12z" fill="#ffb900" />
          <g class="credit"><text x="478" y="1078" textLength="129" fill="#777">Microsoft Bing</text><text x="628" y="1089" textLength="484">© 2025 TomTom, © 2025 Microsoft Corporation,</text>
            <text x="1119" y="1089" textLength="185" fill="#3d62b8" text-decoration="underline">© OpenStreetMap</text><text x="1321" y="1089" textLength="63" fill="#3d62b8" text-decoration="underline">Terms</text></g>
        </svg>

        <div class="visual card kpi"><b>5.23K</b><span>Sum of temperature_celsius</span></div>

        <div class="visual card donut">
          <svg width="230" height="194" viewBox="0 0 230 194">
            <text x="6" y="16" font-size="14" fill="#252423" textLength="199" font-family="Roboto">Sum of cloud by condition_text</text>
            {#each slices as s}<path d={arc(s)} fill={s[2]} />{/each}
            <path d="M59 47H71V52M28 70H39L43 73M47 157H57L60 153M127 150H116L112 146" fill="none" stroke="#8aa5bd" />
            <g fill="#605e5c" font-size="11">
              <text x="19" y="59.500" textLength="37">0K (1....)</text><text x="13" y="73" textLength="12">2K</text><text x="11" y="87.500" textLength="13">(...)</text>
              <text x="33" y="149" textLength="12">3K</text><text x="11" y="163.500" textLength="33">(23.5...)</text><text x="130" y="143" textLength="12">7K</text><text x="130" y="157" textLength="27">(51....)</text>
              <text x="158" y="36" font-size="13" font-weight="600" textLength="55">conditio...</text>
              {#each legend as [name, color, len], i}
                <circle cx="163" cy={50 + i * 22.100} r="4.700" fill={color} /><text x="170" y={55 + i * 22.100} font-size="13" textLength={len + 6}>{name}</text>
              {/each}
            </g>
            <path d="M182 177H199L190.500 187Z" fill="#fff" /><path d="M186 179H195L190.500 184.500Z" fill="#252423" />
          </svg>
        </div>

        <div class="visual card tablecard">
          <div class="grid">
            <div class="thead"><span>moonset</span><span>sunset</span><span>moonrise</span><span>sunrise</span></div>
            {#each rows as row}<div class="trow">{#each row as c}<span>{c}</span>{/each}</div>{/each}
          </div>
          <div class="track"><i></i></div>
        </div>

        <div class="visual card gauge">
          <svg width="356" height="229" viewBox="146 591.500 356 229">
            <text x="151.500" y="609" font-size="14.500" font-weight="700" fill="#252423" textLength="97" lengthAdjust="spacingAndGlyphs" font-family="DejaVu Serif">temperature</text>
            <path d="M194.300 776A150.500 150.500 0 0 1 495.300 776H450.100A105.300 105.300 0 0 0 239.500 776Z" fill="#f3f2f1" />
            <path d="M194.300 776A150.500 150.500 0 0 1 327 626.600L332.300 671.400A105.300 105.300 0 0 0 239.500 776Z" fill="#893395" />
            <path d="M194.800 763.700L239.500 767.400" stroke="#e8c04e" stroke-width="1.600" />
            <g fill="#605e5c" font-size="14">
              <text x="156.500" y="763" textLength="34" lengthAdjust="spacingAndGlyphs">3.33K</text><text x="194" y="795" textLength="16" lengthAdjust="spacingAndGlyphs">2K</text>
              <text x="454" y="795" textLength="42" lengthAdjust="spacingAndGlyphs">35.07K</text>
              <text x="284" y="765" font-size="46" font-weight="200" textLength="122" lengthAdjust="spacingAndGlyphs" font-family="Roboto">17.54K</text>
            </g>
          </svg>
        </div>

        <div class="visual tools">
          <svg width="29" height="29" viewBox="0 0 29 29"><path d="M5 7H24V9L17 17V25H12V17L5 9Z" /></svg>
          <svg width="29" height="29" viewBox="0 0 29 29"><path d="M14 9H6V25H23V16M6 18H13V25M15 16L23 8M18 8H23V13" /></svg>
          <svg width="29" height="29" viewBox="0 0 29 29"><g fill="#555" stroke="none"><circle cx="7" cy="15" r="1.600" /><circle cx="14.500" cy="15" r="1.600" /><circle cx="22" cy="15" r="1.600" /></g></svg>
        </div>
        <div class="visual seltable">
          <div class="st">
            <div class="sth"><span>Sum of visibility_km<i></i></span><span>Sum of visibility_miles</span></div>
            <div class="str"><span>2472</span><span>1464</span></div>
          </div>
          <div class="htrack"><i></i></div>
          <svg width="235" height="75" viewBox="0 0 235 75" fill="none" stroke="#8f918c" stroke-width="4.500" stroke-opacity=".9"><path d="M2 14V2.500H14M221 2.500H233V14M233 61V72.500H221M14 72.500H2V61M110 2.500H125M110 72.500H125M2 30V45M233 30V45" /></svg>
        </div>

        <div class="visual card slicer">
          <div class="sh"><span>timezone</span>{@render chev(12)}</div>
          <div class="so"><i></i>Africa/Accra</div>
          <div class="so"><i class="on"></i>Africa/Addis_Ababa</div>
          <div class="so"><i></i>Africa/Algiers</div>
          <div class="thumb"></div>
        </div>

        <div class="visual card tree">
          <svg width="275" height="211" viewBox="861 608 275 211">
            <text x="867.500" y="624" font-size="14.500" font-weight="700" fill="#252423" textLength="86" lengthAdjust="spacingAndGlyphs" font-family="DejaVu Serif">Air equality</text>
            <circle cx="872.500" cy="643" r="4.500" fill="#118dff" /><circle cx="960.500" cy="643" r="4.500" fill="#12239e" /><circle cx="1042.500" cy="643" r="4.500" fill="#e66c37" />
            <g fill="#605e5c" font-size="12.500"><text x="879" y="647.500" textLength="73">Sum of air_q...</text><text x="967.500" y="647.500" textLength="66">Sum of air_...</text><text x="1049.500" y="647.500" textLength="57">Sum of ai...</text></g>
            <path d="M1121 635.500L1129 643L1121 650Z" fill="#252423" stroke="#fff" stroke-width="1.600" />
            <rect x="867.500" y="655.500" width="261.500" height="156" fill="#fff" />
            <rect x="868.500" y="656.500" width="202.500" height="154" fill="#106ac0" /><rect x="1073" y="656.500" width="55" height="62" fill="#e66c37" /><rect x="1073" y="720.500" width="55" height="62" fill="#12239e" />
            <rect x="1073" y="785" width="40.500" height="26" fill="#d64550" /><rect x="1115" y="785" width="6.500" height="15" fill="#e044a7" /><rect x="1123" y="785" width="5.500" height="15" fill="#118dff" />
            <rect x="1115" y="801.500" width="13.500" height="5" fill="#d9b300" /><rect x="1115" y="808" width="13.500" height="3" fill="#6b007b" />
            <g fill="#fff" font-size="12"><text x="871.500" y="671" textLength="191">Sum of air_quality_Carbon_Monoxide</text><text x="1077" y="671" textLength="45">Sum of...</text><text x="1077" y="736" textLength="45">Sum of...</text><text x="1077" y="800" textLength="31">Sum...</text></g>
          </svg>
        </div>
      </div>

      <aside class="filters">
        <div class="fhead">
          <svg width="24" height="20" viewBox="0 0 24 20"><path d="M1.500 1.500H22L14.500 9.500V18H9.500V9.500Z" fill="none" stroke="#252423" stroke-width="1.800" /></svg>
          <b>Filters</b>
          <svg class="eye" width="18" height="14" viewBox="0 0 18 14" fill="none" stroke="#252423" stroke-width="1.500"><path d="M1 7Q9-2 17 7" /><circle cx="9" cy="8" r="2.200" /></svg>
          {@render collapse()}
        </div>
        <div class="fsearch">{@render lens(19)}<span>Search</span></div>
        <div class="fbody">
          <div class="flabel">Filters on this visual<i>...</i></div>
          <div class="fcard two">Sum of visibility_km<br />is (All)</div>
          <div class="fcard two">Sum of visibility_miles<br />is (All)</div>
          <div class="fcard">Add data fields here</div>
          <div class="flabel next">Filters on this page<i>...</i></div>
          <div class="fcard">Add data fields here</div>
          <div class="flabel next">Filters on all pages<i>...</i></div>
          <div class="fcard">Add data fields here</div>
        </div>
      </aside>

      <footer class="pages">
        <div class="mode on"><svg width="26" height="22" viewBox="0 0 26 22" fill="none" stroke="#4a4846" stroke-width="1.700"><path d="M1.500 2H24.500V15.500H1.500ZM13 15.500V19M9 19H17" /></svg></div>
        <svg class="phone" width="18" height="27" viewBox="0 0 18 27" fill="none" stroke="#4a4846" stroke-width="1.700"><rect x="1" y="1" width="15.500" height="24" rx="1.500" /><path d="M7 21H10.500" /></svg>
        <svg class="arrows" width="36" height="12" viewBox="0 0 36 12" fill="#c4c2c0"><path d="M7 0V12L0 6ZM28 0V12L35 6Z" /></svg>
        <div class="ptab">Page 1</div>
        <div class="padd"><svg width="14" height="14" viewBox="0 0 14 14"><path d="M7 0V14M0 7H14" stroke="#fff" stroke-width="3.600" /></svg></div>
      </footer>
    </div>

    <aside class="viz">
      <div class="phead"><b>Visualizations</b>{@render collapse()}</div>
      <div class="build">Build visual</div>
      <div class="modes">
        <div class="msel"><svg width="32" height="32" viewBox="0 0 32 32"><path d="M1 1.500H25" stroke="#222" stroke-width="1.500" /><path d="M1.500 8H30V17H1.500ZM1.500 22H30V31H1.500Z" fill="#117865" stroke="#fff" stroke-width="1.800" /><path d="M1.500 8H30V17H1.500ZM1.500 22H30V31H1.500Z" fill="none" stroke="#222" stroke-width="1.500" stroke-dasharray="2.500 1.500" /></svg></div>
        <svg width="30" height="32" viewBox="0 0 30 32" fill="none" stroke="#252423" stroke-width="1.700"><path d="M2 25V14H9V3H16V22M16 9H23V12M9 14V24" /><path d="M28 12L15 23L18 26ZM15 23Q11 22 10 26Q9 29 5 30Q14 32 17 27" fill="#f3f2f1" /></svg>
        <svg width="32" height="32" viewBox="0 0 32 32" fill="none" stroke="#252423" stroke-width="1.700"><circle cx="14" cy="14" r="12" /><path d="M3 14L9 10L13 14L24 7M8 23V17M12 25V18M16 25V16M20 23V13" /><path d="M22 22L30 30" stroke-width="3.500" /></svg>
      </div>
      <svg class="notch" width="221" height="12" viewBox="0 0 221 12"><path d="M0 10.500H20L29.500 1L39 10.500H221" fill="none" stroke="#979593" stroke-width="1.200" /></svg>
      <div class="vgrid">
        {#each visuals as v, i}<div class="vi" class:picked={i === 27}><svg width="24" height="24" viewBox="0 0 24 24">{@render shapes(v)}</svg></div>{/each}
      </div>
      <div class="vmore">. . .</div>
      <div class="wells">
        <div class="wl">Columns</div>
        <div class="dash">
          {#each ['Sum of visibility_km', 'Sum of visibility_miles'] as f}
            <div class="pill"><span>{f}</span>{@render chev(16)}<svg width="12" height="12" viewBox="0 0 12 12"><path d="M1 1L11 11M11 1L1 11" stroke="#333" stroke-width="1.200" /></svg></div>
          {/each}
        </div>
        <div class="wl drill2">Drill through</div>
        <div class="opt">Cross-report<span class="toggle"><i></i>Off</span></div>
        <div class="opt">Keep all filters<span class="toggle on">On<i></i></span></div>
        <div class="dash add">Add drill-through fields here</div>
      </div>
    </aside>

    <aside class="data">
      <div class="phead"><b>Data</b>{@render collapse()}</div>
      <div class="dsearch">{@render lens(19, true)}<span>Search</span></div>
      <div class="list">
        <div class="root">
          {@render chev(16)}
          <svg width="24" height="24" viewBox="0 0 24 24" fill="none" stroke="#333" stroke-width="1.500"><rect x="2" y="3.500" width="14" height="13" rx="2" /><path d="M2 8H16M2 12H16M6.500 4V16M11.500 4V16" /><circle cx="16.500" cy="16.500" r="7" fill="#117865" stroke="none" /><path d="M13.500 16.500L15.800 18.800L19.800 14.800" stroke="#fff" /></svg>
          <span>GlobalWeatherRepos...</span>
        </div>
        {#each fields as [name, kind]}
          <div class="field">
            <em>{#if kind === 2}<svg width="9" height="15" viewBox="0 0 9 15"><path d="M1 1L8 7.500L1 14" fill="none" stroke="#333" stroke-width="1.200" /></svg>{/if}</em>
            <i></i>
            <svg width="16" height="16" viewBox="0 0 16 16" fill="none" stroke="#333" stroke-width="1.300">
              {#if kind === 1}<path d="M14.500 1H2L8.500 8L2 15H14.500" />{:else if kind === 2}<rect x="1" y="1.500" width="14" height="13" rx="2.500" /><path d="M1 5H15M4 8.500H5.500M7.300 8.500H8.800M10.600 8.500H12M4 11.500H5.500M7.300 11.500H8.800" />{/if}
            </svg>
            <span>{name}</span>
          </div>
        {/each}
        <div class="dscroll"></div>
      </div>
    </aside>
  </main>

  <footer class="status">
    <span>Page 1 of 1</span>
    <div class="zoom">
      <svg width="152" height="16" viewBox="0 0 152 16" stroke="#333" fill="none" stroke-width="1.200"><path d="M0 8H6M143 8H152M147.500 3.500V12.500" /><path d="M13 8H134" stroke="#777" stroke-width="1" /><path d="M73.500 5V11" stroke="#777" /><path d="M50 2.500h4v11h-4z" fill="#333" /></svg>
      <span>70%</span>
      <svg width="20" height="16" viewBox="0 0 20 16" fill="none" stroke="#444" stroke-width="1.400"><rect x="1" y="1" width="18" height="14" rx="1" /><path d="M4 6V4H7M13 4H16V6M16 10V12H13M7 12H4V10" /></svg>
    </div>
  </footer>
</div>

<style>
  :global(body) { margin: 0; background: #f3f2f1; }
  .app { width: 1920px; height: 1020px; display: flex; flex-direction: column; overflow: hidden; font-family: 'Open Sans', 'Noto Sans', sans-serif; font-size: 14.4px; color: #252423; box-sizing: border-box; border-bottom: 2px solid #000; letter-spacing: -0.2px; }
  .app :global(*) { box-sizing: border-box; }
  svg { overflow: visible; flex: none; display: block; }
  span { white-space: nowrap; }

  .titlebar { height: 43px; flex: none; background: #3b3a38; color: #fff; display: flex; align-items: center; }
  .qa { margin-left: 20px; }
  .doc { margin-left: 2px; width: 261px; padding-top: 5px; font-size: 14.6px; letter-spacing: -0.38px; }
  .topsearch { margin-left: 396px; width: 500px; height: 30px; background: #d4d4d2; border-radius: 3px; display: flex; align-items: center; padding-left: 21px; gap: 14px; color: #2b5e53; font-size: 16.4px; }
  .signin { margin-left: 359px; width: 58px; font-size: 15px; letter-spacing: -0.3px; }
  .win { margin-left: 39px; }

  .tabs { height: 38px; flex: none; background: #fafafa; display: flex; position: relative; font-size: 17px; letter-spacing: -0.35px; }
  .t { height: 38px; line-height: 39px; margin-right: 40px; }
  .file { margin-left: 28px; width: 33px; }
  .home { width: 48px; font-weight: 700; border-bottom: 3px solid #117865; letter-spacing: -1.1px; }
  .insert { width: 43px; } .modeling { width: 74px; } .view { width: 35px; } .optimize { width: 70px; } .help { width: 36px; margin-right: 19px; }
  .ctx { background: #fff; color: #117865; font-weight: 600; text-align: center; letter-spacing: -0.45px; }
  .format { width: 94px; margin-right: 5px; } .drill { width: 124px; }
  .share { margin: 5px 7px 0 auto; width: 105px; height: 30px; border: 0; border-radius: 4px; background: #117865; color: #fff; display: flex; align-items: center; gap: 4px; padding: 0 0 0 9px; font: 14.6px 'Open Sans', sans-serif; letter-spacing: -0.3px; }
  .share span { margin-left: 5px; }

  .ribbon { height: 119px; flex: none; background: #fafafa; display: flex; position: relative; z-index: 2; box-shadow: 0 1px 4px rgba(0, 0, 0, 0.22); padding-top: 7px; }
  .group { height: 110px; border-right: 1px solid #d0cecc; display: flex; flex-direction: column; align-items: center; flex: none; }
  .clip { width: 201px; }
  .gbody { height: 95px; width: 100%; display: flex; }
  .gname { font-size: 12px; line-height: 15px; letter-spacing: -0.3px; color: #3b3a38; }
  .btn, .paste { display: flex; flex-direction: column; align-items: center; padding-top: 4px; flex: none; }
  .btn span, .paste span { font-size: 14.3px; line-height: 20px; height: 20px; letter-spacing: -0.35px; display: block; }
  .btn svg + span, .paste svg + span { margin-top: 2px; }
  .mini { display: inline-block; margin-left: 2px; vertical-align: middle; }
  .off .btn { color: #bdbbb9; }
  .paste { width: 69px; color: #bdbbb9; }
  .cliplist { font-size: 14.3px; letter-spacing: -0.2px; }
  .cliplist div { display: flex; align-items: center; gap: 5px; height: 30px; margin-left: -4px; white-space: nowrap; position: relative; top: -1px; }
  .up { margin: 97px 6px 0 auto; }

  main { flex: 1; display: flex; min-height: 0; }
  .rail { width: 51px; flex: none; background: #f3f2f1; border-right: 1px solid #d8d6d4; display: flex; flex-direction: column; }
  .rail div { height: 50px; display: flex; justify-content: center; align-items: center; border-left: 3px solid transparent; padding-right: 3px; }
  .rail .sel { border-color: #117865; }
  .stage { width: 1417px; flex: none; display: grid; grid-template: 746px 44px / 1166px 251px; }
  .canvas { background: #fff; position: relative; overflow: hidden; }
  .pagearea { position: absolute; left: 21px; top: 11px; width: 1124px; height: 634px; border: 2px dotted #555; }
  .visual { position: absolute; }
  .maptitle { left: 99px; top: 45px; width: 330px; font: 13.8px/17.2px Roboto, sans-serif; letter-spacing: 0.35px; }
  .map { left: 98px; top: 82px; width: 350px; height: 288px; overflow: hidden; }
  .labels { font: 700 25px 'Open Sans'; fill: #222; paint-order: stroke; stroke: #fff; stroke-width: 4px; }
  .sea { font: 600 22px 'Open Sans'; fill: #5577ae; }
  .credit { font: 22px 'Liberation Sans'; fill: #333; paint-order: stroke; stroke: rgba(255, 255, 255, 0.6); stroke-width: 2px; }
  .card { border: 1px solid #252423; border-radius: 5px; box-shadow: 6px 7px 10px rgba(0, 0, 0, 0.32); }
  .kpi { left: 529px; top: 44px; width: 222px; height: 110px; background: #ccc; border-color: #4b56a8; border-radius: 12px; display: flex; flex-direction: column; align-items: center; }
  .kpi b { font: 700 52px/52px 'Liberation Serif', serif; color: #a9347f; margin-top: 24px; letter-spacing: 0; }
  .kpi span { font-size: 14px; color: #605e5c; line-height: 24px; letter-spacing: -0.35px; }
  .donut { left: 529px; top: 179px; width: 232px; height: 196px; background: #a0d1ff; }
  .tablecard { left: 809px; top: 46px; width: 277px; height: 328px; background: #abaedc; border-color: #4752a0; }
  .grid { margin: 6px 0 0 7px; width: 221px; height: 314px; overflow: hidden; font-size: 11.7px; letter-spacing: -0.32px; }
  .thead, .trow { display: grid; grid-template-columns: 58px 53px 57px 53px; background: #fff; }
  .thead { height: 26px; border-bottom: 1px solid #2f9bf3; line-height: 19px; }
  .trow { height: 18.45px; line-height: 17px; }
  .trow:nth-child(odd) { background: #ebebeb; }
  .thead span, .trow span { padding-left: 4px; border-right: 1px solid #ececf2; }
  .track { position: absolute; right: 7px; top: 6px; width: 8px; height: 314px; border-radius: 4px; background: #d5d6ec; }
  .track i { display: block; height: 19px; width: 6px; margin: 1px; border-radius: 3px; background: #83859e; }
  .gauge { left: 94px; top: 390px; width: 358px; height: 230px; background: #c499c9; border-color: #6c6fc4; }
  .tools { left: 662px; top: 385px; display: flex; gap: 5px; }
  .tools svg { background: #fff; fill: none; stroke: #605e5c; stroke-width: 1.5; }
  .seltable { left: 528px; top: 414px; width: 235px; height: 75px; background: #a1a5d9; border: 3px solid #b5b5b5; box-shadow: 6px 7px 10px rgba(0, 0, 0, 0.32); }
  .seltable > svg { position: absolute; left: -3px; top: -3px; }
  .st { margin: 5px 0 0 6px; width: 217px; height: 44px; background: #fff; overflow: hidden; font-size: 12px; letter-spacing: -0.42px; }
  .sth, .str { display: grid; grid-template-columns: 112px 150px; }
  .sth { height: 26px; border-bottom: 1px solid #7cbcf0; line-height: 20px; }
  .sth span { padding-left: 4px; position: relative; border-right: 1px solid #e8e8ee; }
  .sth i { position: absolute; left: 5px; top: 18px; border: 4px solid transparent; border-top: 0; border-bottom-color: #222; }
  .str { height: 18px; line-height: 17px; background: #e4e4e4; border-left: 3px solid #222; }
  .str span { text-align: right; padding-right: 8px; }
  .str span + span { text-align: left; padding-left: 90px; }
  .htrack { margin: 8px 0 0 6px; width: 217px; height: 7px; border-radius: 4px; background: #cdd0ec; padding-left: 1px; }
  .htrack i { display: block; width: 200px; height: 7px; border-radius: 4px; background: #83859e; }
  .slicer { left: 529px; top: 514px; width: 232px; height: 104px; background: #f1b3d9; padding: 5px 13px; }
  .sh { display: flex; justify-content: space-between; align-items: center; height: 18px; font: 400 12px Roboto, sans-serif; letter-spacing: 0.4px; color: #222; }
  .so { display: flex; align-items: center; height: 25.5px; gap: 7px; font-size: 14.1px; color: #333; letter-spacing: -0.3px; }
  .so i { width: 14px; height: 14px; border: 1px solid #777; }
  .so .on { background: #222; border-color: #222; }
  .thumb { position: absolute; right: 6px; top: 22px; width: 7px; height: 18px; background: #d1b3c5; }
  .tree { left: 809px; top: 407px; width: 277px; height: 213px; background: #efa788; border-color: #9b5ba5; box-shadow: 6px 7px 10px rgba(17, 141, 255, 0.16); }

  .filters { background: #fff; border-left: 1px solid #a19f9d; }
  .fhead { display: flex; align-items: center; height: 49px; padding: 0 12px 0 13px; }
  .fhead b { font-size: 18px; font-weight: 600; margin-left: 8px; letter-spacing: -0.3px; }
  .eye { margin-left: auto; margin-right: 20px; }
  .fsearch { margin: 8px 15px 5px 10px; height: 38px; border: 1px solid #a5a3a1; border-radius: 2px; display: flex; align-items: center; padding-left: 13px; gap: 17px; font-size: 15.5px; }
  .fbody { border-top: 1px solid #a5a3a1; padding: 20px 9px 0 10px; letter-spacing: -0.15px; }
  .flabel { display: flex; justify-content: space-between; height: 33px; line-height: 21px; padding-right: 4px; }
  .flabel i { font-style: normal; letter-spacing: 2px; line-height: 26px; }
  .fcard { height: 57px; border: 1px solid #bebbb8; border-radius: 2px; text-align: center; line-height: 57px; margin-bottom: 7.5px; }
  .fcard.two { text-align: left; padding-left: 10px; line-height: 23px; padding-top: 4px; }
  .next { margin-top: 32px; height: 32px; }

  .pages { grid-column: 1 / 3; background: #f3f2f1; display: flex; align-items: flex-start; }
  .mode { width: 30px; height: 38px; margin-left: 12px; border-bottom: 3px solid #117865; padding: 7px 2px; }
  .phone { margin: 6px 0 0 31px; }
  .arrows { margin: 15px 0 0 25px; }
  .ptab { margin-left: 6px; width: 94px; height: 44px; background: #fff; border-left: 1px solid #979593; border-bottom: 5px solid #117865; text-align: center; line-height: 45px; font-size: 14.4px; font-weight: 600; letter-spacing: -0.55px; }
  .padd { width: 49px; height: 44px; margin-left: 1px; background: #117865; display: flex; align-items: center; justify-content: center; padding-bottom: 4px; }

  .viz { width: 226px; flex: none; background: #f3f2f1; border-left: 1px solid #c8c6c4; border-right: 1px solid #d8d6d4; }
  .phead { display: flex; align-items: center; justify-content: space-between; height: 49px; padding: 0 9px 0 10px; }
  .phead b { font-size: 18.5px; font-weight: 600; letter-spacing: -0.35px; }
  .build { padding-left: 10px; height: 23px; line-height: 18px; font-size: 14.7px; font-weight: 600; letter-spacing: -0.5px; }
  .modes { height: 40px; display: flex; justify-content: space-between; align-items: center; padding: 0 13px 0 10px; }
  .msel { width: 40px; height: 40px; background: #d0cfce; border-radius: 3px; padding: 4px; }
  .notch { margin-top: 5px; }
  .vgrid { display: grid; grid-template-columns: repeat(6, 35px); grid-auto-rows: 35px; padding: 7px 0 0 8px; }
  .vi { display: flex; align-items: center; justify-content: center; margin: 2px; border: 1px solid transparent; }
  .picked { border-color: #222; }
  .vmore { height: 41px; padding-left: 15px; font-size: 15px; font-weight: 700; border-bottom: 1px solid #d8d6d4; line-height: 18px; }
  .wells { padding: 10px 7px 0 5px; letter-spacing: -0.15px; }
  .wl { padding-left: 10px; height: 27px; line-height: 24px; }
  .dash { border: 1px dashed #bebbb8; background: #fff; height: 76px; padding: 4px 3px; }
  .pill { height: 28px; margin-bottom: 2px; border: 1px solid #bebbb8; border-radius: 2px; background: #eceae8; display: flex; align-items: center; padding: 0 5px 2px 4px; gap: 6px; }
  .pill span { flex: 1; }
  .drill2 { margin-top: 11px; font-weight: 600; color: #484644; letter-spacing: -0.4px; font-size: 14px; }
  .opt { height: 33.5px; display: flex; align-items: center; justify-content: space-between; padding: 0 18px 0 10px; letter-spacing: -0.25px; font-size: 14.2px; }
  .toggle { width: 40px; height: 20px; border: 1px solid #797775; border-radius: 10px; background: #fff; display: flex; align-items: center; gap: 3px; padding-left: 5px; font-size: 11px; color: #605e5c; }
  .toggle i { width: 10px; height: 10px; border-radius: 5px; background: #605e5c; }
  .toggle.on { background: #117865; border-color: #117865; color: #fff; gap: 4px; }
  .toggle.on i { background: #fff; }
  .add { height: 33px; margin-top: 6px; line-height: 23px; text-align: center; }

  .data { flex: 1; background: #f3f2f1; }
  .dsearch { margin: 8px 5px 0 6px; height: 30px; border: 1px solid #c8c6c4; border-bottom-color: #605e5c; border-radius: 4px; background: #fff; display: flex; align-items: center; padding-left: 14px; gap: 10px; font-size: 15.2px; color: #605e5c; }
  .flip { transform: scaleX(-1); }
  .list { position: relative; height: 684px; margin-top: 9px; overflow: hidden; padding-top: 2px; }
  .root { height: 30px; display: flex; align-items: center; padding-left: 16px; gap: 2px; }
  .root span { letter-spacing: -0.2px; }
  .field { height: 30px; display: flex; align-items: center; padding-left: 37px; }
  .field em { width: 19px; display: flex; }
  .field i { width: 15px; height: 15px; border: 1px solid #797775; border-radius: 2px; margin-right: 10px; }
  .field span { margin-left: 5px; font-size: 14.2px; letter-spacing: -0.1px; }
  .dscroll { position: absolute; right: 5px; top: 1px; width: 10px; height: 369px; background: #c8c8c8; }

  .status { height: 28px; flex: none; border-top: 1px solid #d8d6d4; display: flex; align-items: center; justify-content: space-between; padding: 3px 22px 0 5px; color: #484644; font-size: 14.6px; }
  .zoom { display: flex; align-items: center; gap: 15px; }
  .zoom span { width: 39px; font-size: 13.6px; }
</style>
